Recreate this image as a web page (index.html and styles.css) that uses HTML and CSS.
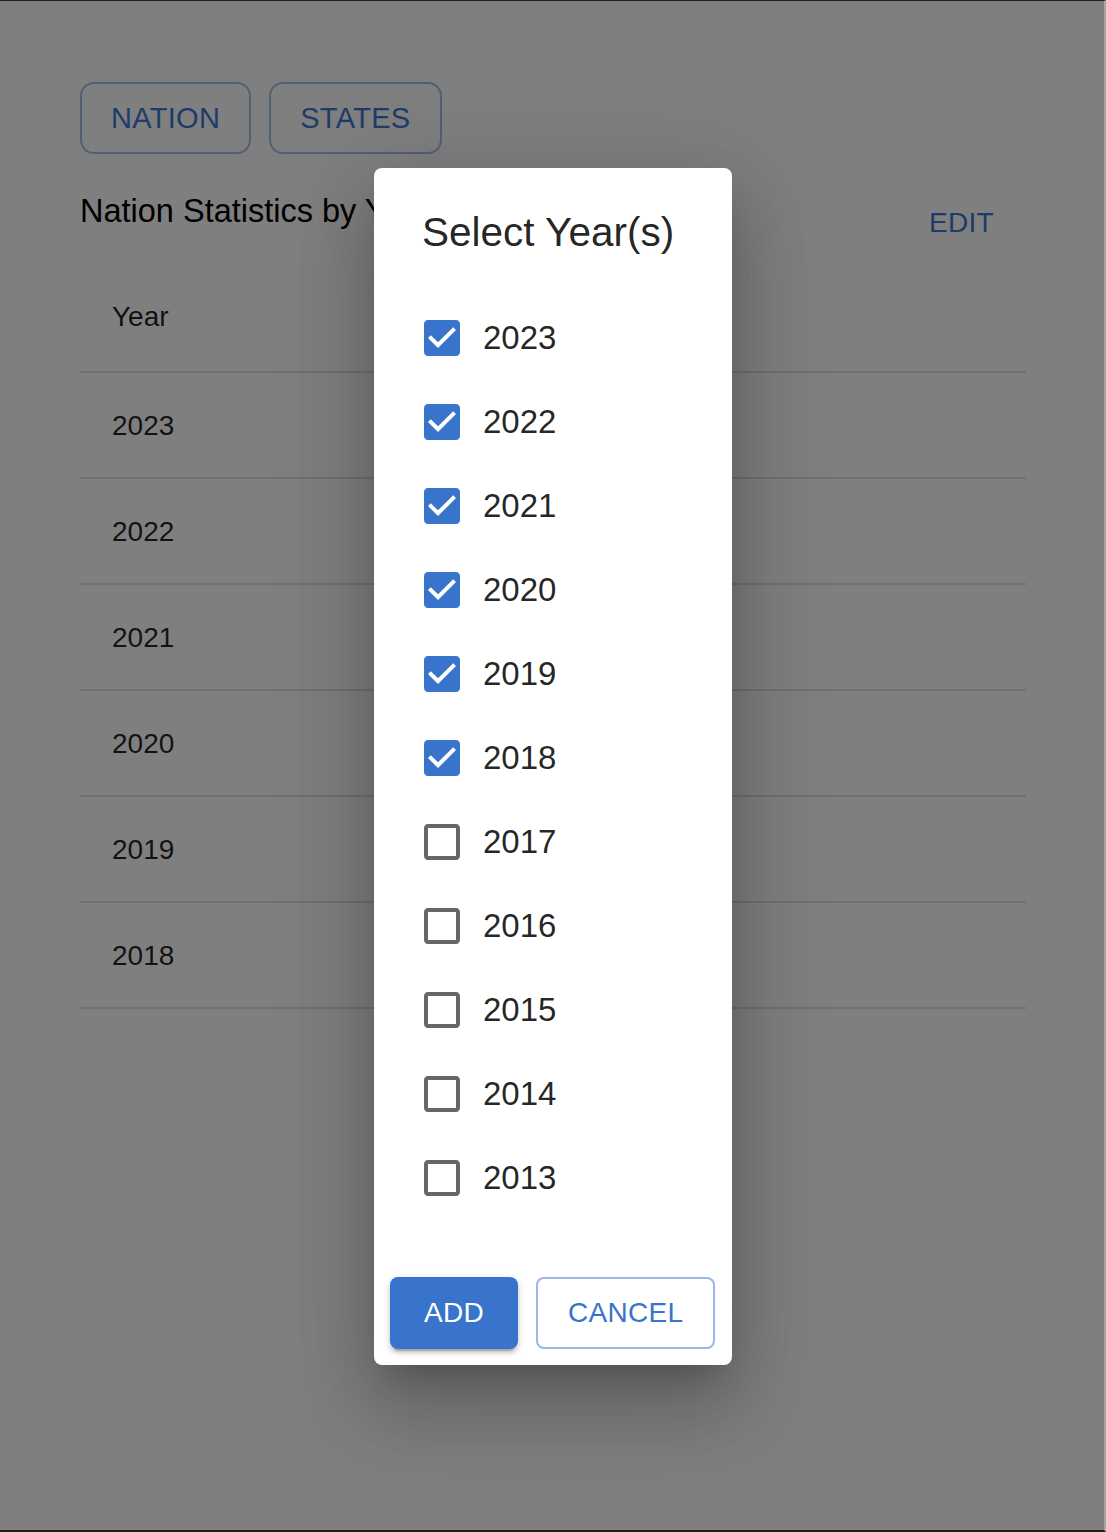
FILE: index.html
```html
<!DOCTYPE html>
<html lang="en">
<head>
<meta charset="utf-8">
<title>Nation Statistics</title>
<link rel="stylesheet" href="styles.css">
</head>
<body>
<div class="window">
  <main class="page">
    <div class="tabs">
      <button class="tab">NATION</button>
      <button class="tab">STATES</button>
    </div>
    <div class="title-row">
      <h1 class="page-title">Nation Statistics by Year</h1>
      <button class="text-btn">EDIT</button>
    </div>
    <table class="stats">
      <thead>
        <tr><th>Year</th></tr>
      </thead>
      <tbody>
        <tr><td>2023</td></tr>
        <tr><td>2022</td></tr>
        <tr><td>2021</td></tr>
        <tr><td>2020</td></tr>
        <tr><td>2019</td></tr>
        <tr><td>2018</td></tr>
      </tbody>
    </table>
  </main>

  <div class="overlay">
    <div class="dialog" role="dialog">
      <h2 class="dialog-title">Select Year(s)</h2>
      <ul class="year-list">
        <li class="year-item"><svg class="cb checked" viewBox="0 0 24 24"><path d="M19 3H5c-1.11 0-2 .9-2 2v14c0 1.1.89 2 2 2h14c1.11 0 2-.9 2-2V5c0-1.1-.89-2-2-2zm-9 14l-5-5 1.41-1.41L10 14.170l7.59-7.59L19 8l-9 9z"/></svg><span class="year-label">2023</span></li>
        <li class="year-item"><svg class="cb checked" viewBox="0 0 24 24"><path d="M19 3H5c-1.11 0-2 .9-2 2v14c0 1.1.89 2 2 2h14c1.11 0 2-.9 2-2V5c0-1.1-.89-2-2-2zm-9 14l-5-5 1.41-1.41L10 14.17l7.59-7.59L19 8l-9 9z"/></svg><span class="year-label">2022</span></li>
        <li class="year-item"><svg class="cb checked" viewBox="0 0 24 24"><path d="M19 3H5c-1.11 0-2 .9-2 2v14c0 1.1.89 2 2 2h14c1.11 0 2-.9 2-2V5c0-1.1-.89-2-2-2zm-9 14l-5-5 1.41-1.41L10 14.17l7.59-7.59L19 8l-9 9z"/></svg><span class="year-label">2021</span></li>
        <li class="year-item"><svg class="cb checked" viewBox="0 0 24 24"><path d="M19 3H5c-1.11 0-2 .9-2 2v14c0 1.1.89 2 2 2h14c1.11 0 2-.9 2-2V5c0-1.1-.89-2-2-2zm-9 14l-5-5 1.41-1.41L10 14.17l7.59-7.59L19 8l-9 9z"/></svg><span class="year-label">2020</span></li>
        <li class="year-item"><svg class="cb checked" viewBox="0 0 24 24"><path d="M19 3H5c-1.11 0-2 .9-2 2v14c0 1.1.89 2 2 2h14c1.11 0 2-.9 2-2V5c0-1.1-.89-2-2-2zm-9 14l-5-5 1.41-1.41L10 14.17l7.59-7.59L19 8l-9 9z"/></svg><span class="year-label">2019</span></li>
        <li class="year-item"><svg class="cb checked" viewBox="0 0 24 24"><path d="M19 3H5c-1.11 0-2 .9-2 2v14c0 1.1.89 2 2 2h14c1.11 0 2-.9 2-2V5c0-1.1-.89-2-2-2zm-9 14l-5-5 1.41-1.41L10 14.17l7.59-7.59L19 8l-9 9z"/></svg><span class="year-label">2018</span></li>
        <li class="year-item"><svg class="cb" viewBox="0 0 24 24"><path d="M19 5v14H5V5h14m0-2H5c-1.1 0-2 .9-2 2v14c0 1.1.9 2 2 2h14c1.1 0 2-.9 2-2V5c0-1.1-.9-2-2-2z"/></svg><span class="year-label">2017</span></li>
        <li class="year-item"><svg class="cb" viewBox="0 0 24 24"><path d="M19 5v14H5V5h14m0-2H5c-1.1 0-2 .9-2 2v14c0 1.1.9 2 2 2h14c1.1 0 2-.9 2-2V5c0-1.1-.9-2-2-2z"/></svg><span class="year-label">2016</span></li>
        <li class="year-item"><svg class="cb" viewBox="0 0 24 24"><path d="M19 5v14H5V5h14m0-2H5c-1.1 0-2 .9-2 2v14c0 1.1.9 2 2 2h14c1.1 0 2-.9 2-2V5c0-1.1-.9-2-2-2z"/></svg><span class="year-label">2015</span></li>
        <li class="year-item"><svg class="cb" viewBox="0 0 24 24"><path d="M19 5v14H5V5h14m0-2H5c-1.1 0-2 .9-2 2v14c0 1.1.9 2 2 2h14c1.1 0 2-.9 2-2V5c0-1.1-.9-2-2-2z"/></svg><span class="year-label">2014</span></li>
        <li class="year-item"><svg class="cb" viewBox="0 0 24 24"><path d="M19 5v14H5V5h14m0-2H5c-1.1 0-2 .9-2 2v14c0 1.1.9 2 2 2h14c1.1 0 2-.9 2-2V5c0-1.1-.9-2-2-2z"/></svg><span class="year-label">2013</span></li>
      </ul>
      <div class="actions">
        <button class="btn btn-primary">ADD</button>
        <button class="btn btn-outline">CANCEL</button>
      </div>
    </div>
  </div>
</div>
</body>
</html>
```

FILE: styles.css
```css
* { box-sizing: border-box; }

html, body {
  margin: 0;
  padding: 0;
  background: #ffffff;
}

body {
  font-family: "Liberation Sans", Arial, sans-serif;
  color: rgba(0, 0, 0, 0.87);
}

.window {
  position: relative;
  width: 1106px;
  height: 1532px;
  overflow: hidden;
  background: #ffffff;
  border-top: 1px solid #1e1e1e;
  border-bottom: 2px solid #1e1e1e;
  border-right: 2px solid #a6a6a6;
}

.page {
  padding: 81px 78px 0 80px;
}

.tabs {
  display: flex;
  gap: 18px;
}

.tab {
  height: 72px;
  padding: 0 29px;
  border: 2px solid rgba(56, 116, 204, 0.45);
  border-radius: 14px;
  background: transparent;
  color: #3a78d2;
  font-family: "Liberation Sans", Arial, sans-serif;
  font-size: 29px;
  letter-spacing: 0.3px;
}

.title-row {
  display: flex;
  justify-content: space-between;
  align-items: flex-start;
  margin-top: 38px;
}

.page-title {
  margin: 0;
  font-size: 32.5px;
  line-height: 38px;
  font-weight: 400;
  color: #000000;
}

.text-btn {
  margin-top: 6px;
  padding: 8px 32px;
  border: 0;
  background: transparent;
  color: #3a78d2;
  font-family: "Liberation Sans", Arial, sans-serif;
  font-size: 28px;
  line-height: 34px;
  letter-spacing: 0.3px;
}

.stats {
  width: 946px;
  margin-top: 17px;
  border-collapse: collapse;
}

.stats th,
.stats td {
  text-align: left;
  font-size: 28px;
  line-height: 34px;
  font-weight: 400;
  color: rgba(0, 0, 0, 0.87);
  padding: 36px 32px 34px 32px;
  border-bottom: 2px solid #e0e0e0;
}

.stats th {
  padding-top: 35px;
  padding-bottom: 37px;
}

.overlay {
  position: absolute;
  inset: 0;
  padding-left: 2px;
  background: rgba(0, 0, 0, 0.5);
  display: flex;
  align-items: center;
  justify-content: center;
}

.dialog {
  width: 358px;
  margin-top: 2px;
  background: #ffffff;
  border-radius: 8px;
  box-shadow: 0 22px 30px -14px rgba(0, 0, 0, 0.2),
              0 48px 76px 6px rgba(0, 0, 0, 0.14),
              0 18px 92px 16px rgba(0, 0, 0, 0.12);
  display: flex;
  flex-direction: column;
}

.dialog-title {
  margin: 0;
  padding: 40px 48px 0 48px;
  font-size: 40.5px;
  line-height: 48px;
  font-weight: 400;
  color: rgba(0, 0, 0, 0.87);
}

.year-list {
  list-style: none;
  margin: 40px 0 0 0;
  padding: 0 0 0 44px;
}

.year-item {
  display: flex;
  align-items: center;
  height: 84px;
  gap: 17px;
}

.cb {
  width: 48px;
  height: 48px;
  flex: none;
  fill: rgba(0, 0, 0, 0.6);
}

.cb.checked {
  fill: #3874cc;
}

.year-label {
  font-size: 33px;
  line-height: 38px;
  color: rgba(0, 0, 0, 0.87);
}

.actions {
  display: flex;
  gap: 18px;
  padding: 57px 16px 16px 16px;
}

.btn {
  height: 72px;
  border-radius: 8px;
  font-family: "Liberation Sans", Arial, sans-serif;
  font-size: 28px;
  letter-spacing: 0.3px;
}

.btn-primary {
  padding: 0 34px;
  border: 0;
  background: #3874cc;
  color: #ffffff;
  box-shadow: 0 6px 2px -4px rgba(0, 0, 0, 0.2),
              0 4px 4px 0 rgba(0, 0, 0, 0.14),
              0 2px 10px 0 rgba(0, 0, 0, 0.12);
}

.btn-outline {
  padding: 0 30px;
  border: 2px solid rgba(56, 116, 204, 0.5);
  background: #ffffff;
  color: #3874cc;
}
```
